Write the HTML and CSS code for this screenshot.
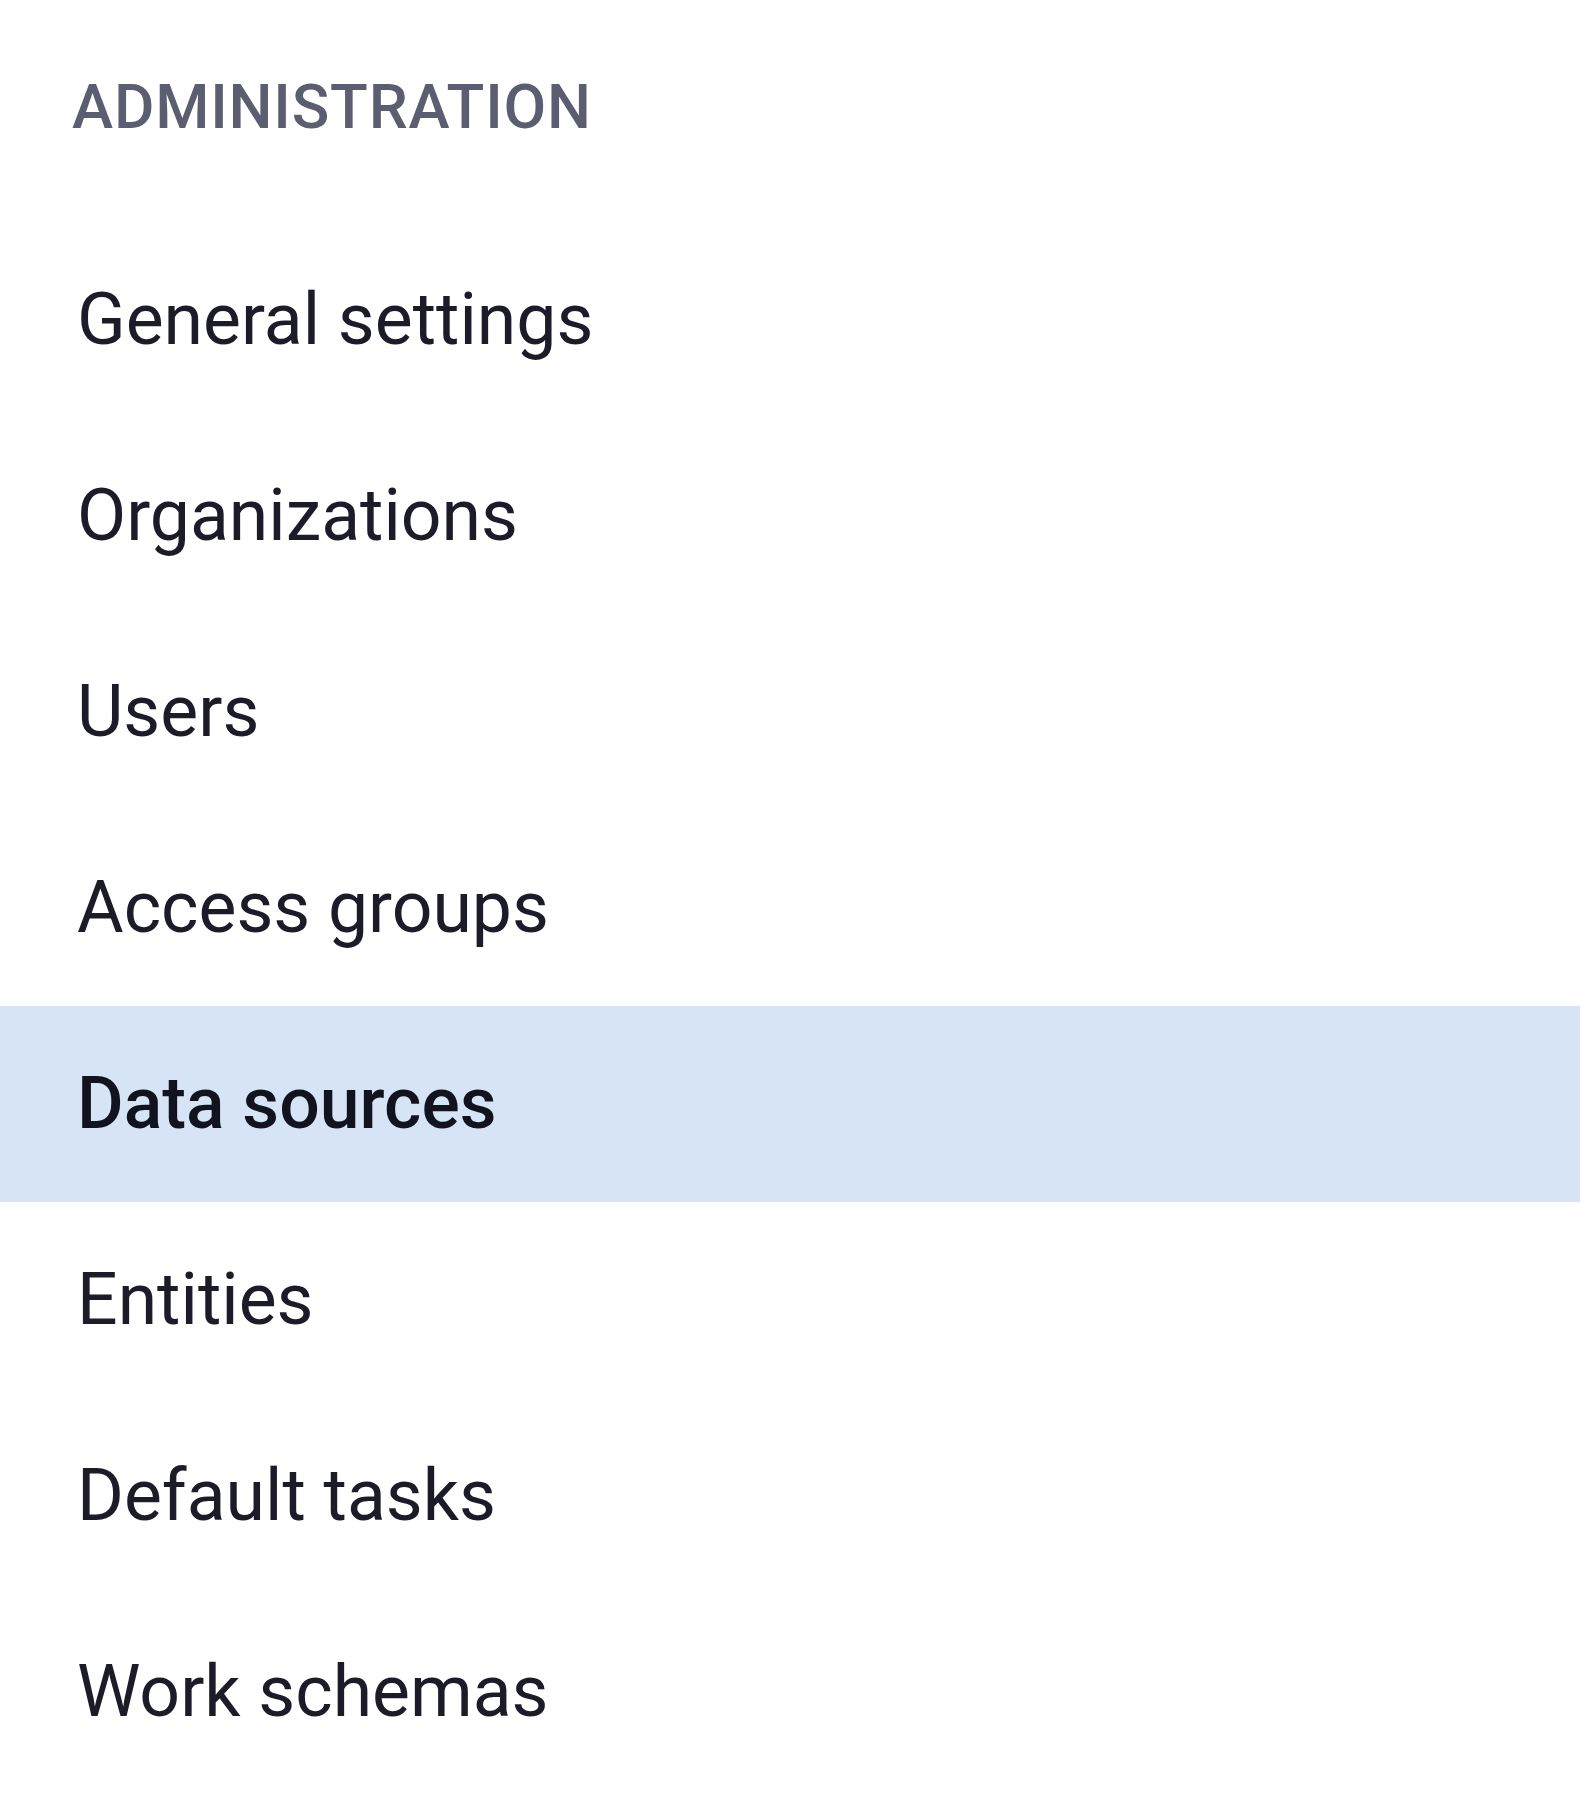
FILE: index.html
```html
<!DOCTYPE html>
<html lang="en">
<head>
  <meta charset="UTF-8" />
  <meta name="viewport" content="width=device-width, initial-scale=1" />
  <title>Administration</title>
  <link rel="stylesheet" href="styles.css">
</head>
<body>

  <!-- Admin sidebar -->
  <nav class="side-nav">
    <div class="nav-title">Administration</div>
    <ul class="nav-list">
      <li class="nav-item">General settings</li>
      <li class="nav-item">Organizations</li>
      <li class="nav-item">Users</li>
      <li class="nav-item">Access groups</li>
      <li class="nav-item active">Data sources</li>
      <li class="nav-item">Entities</li>
      <li class="nav-item">Default tasks</li>
      <li class="nav-item">Work schemas</li>
    </ul>
  </nav>

</body>
</html>
```

FILE: styles.css
```css
* { box-sizing: border-box; margin: 0; padding: 0; }
body {
  font-family: Roboto, 'Liberation Sans', sans-serif;
  background: #fff;
  color: #1b1c28;
}
.side-nav {
  display: flex;
  flex-direction: column;
}
.nav-title {
  height: 222px;
  padding: 71px 0 0 72px;
  font-size: 62px;
  line-height: 72px;
  font-weight: 500;
  letter-spacing: 0.8px;
  text-transform: uppercase;
  color: #5b5e70;
}
.nav-list { list-style: none; }
.nav-item {
  height: 196px;
  line-height: 196px;
  padding-left: 77px;
  font-size: 71.5px;
  white-space: nowrap;
}
.nav-item.active {
  background: #d7e4f6;
  font-weight: 500;
  color: #121320;
}
```
